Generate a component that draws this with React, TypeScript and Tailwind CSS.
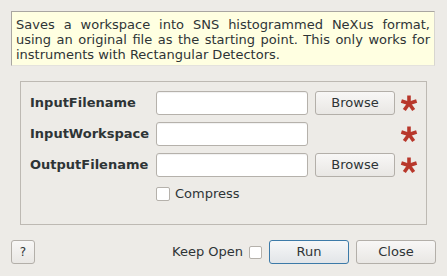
const font = { fontFamily: '"DejaVu Sans", "Liberation Sans", sans-serif' };

const Asterisk = () => (
  <svg width="18" height="18" viewBox="0 0 18 18">
    {[-90, -18, 54, 126, 198].map((a) => {
      const r = (a * Math.PI) / 180;
      return (
        <line
          key={a}
          x1="9"
          y1="9.5"
          x2={9 + Math.cos(r) * 8}
          y2={9.5 + Math.sin(r) * 8}
          stroke="#b8372b"
          strokeWidth="3.6"
          strokeLinecap="butt"
        />
      );
    })}
  </svg>
);

const Field = () => (
  <div className="w-[152px] h-[24px] bg-white border border-[#b5b1ab] rounded-[3px] shadow-[inset_0_1px_1px_rgba(0,0,0,0.06)]" />
);

const Btn = ({ label, primary }: { label: string; primary?: boolean }) => (
  <button
    className={
      "w-[80px] h-[24px] rounded-[3px] border text-[13px] text-[#2e3436] flex items-center justify-center " +
      (primary
        ? "border-[#3c7aa8] bg-gradient-to-b from-[#f6f7f8] to-[#e2e5e8]"
        : "border-[#b3afa9] bg-gradient-to-b from-[#f8f7f6] to-[#e9e7e4]")
    }
  >
    {label}
  </button>
);

const Check = ({ size }: { size: string }) => (
  <div className={"bg-white border border-[#b5b1ab] rounded-[2px] " + size} />
);

const rows = [
  { label: "InputFilename", browse: true },
  { label: "InputWorkspace", browse: false },
  { label: "OutputFilename", browse: true },
];

export default function App() {
  return (
    <div
      className="w-[447px] h-[276px] bg-[#edebe7] text-[#2e3436] text-[13px] p-[11px] flex flex-col overflow-hidden"
      style={font}
    >
      <div className="w-[424px] bg-[#ffffe1] border border-[#a9a6a1] border-r-[#d8d6d0] border-b-[#e4e2dd] pt-[5px] pb-[3px] px-[4px] leading-[15px]">
        <div className="text-justify [text-align-last:justify]">
          Saves a workspace into SNS histogrammed NeXus format,
        </div>
        <div className="text-justify [text-align-last:justify]">
          using an original file as the starting point. This only works for
        </div>
        <div>instruments with Rectangular Detectors.</div>
      </div>

      <div className="mt-[15px] ml-[9px] w-[407px] h-[144px] border border-[#bdb9b3] pt-[9px] pl-[9px] flex flex-col gap-[7px]">
        {rows.map((r) => (
          <div key={r.label} className="flex items-center h-[24px]">
            <div className="w-[126px] font-bold">{r.label}</div>
            <Field />
            <div className="ml-[7px] w-[80px]">{r.browse && <Btn label="Browse" />}</div>
            <div className="ml-[5px] flex items-center">
              <Asterisk />
            </div>
          </div>
        ))}
        <div className="flex items-center h-[20px] ml-[126px]">
          <Check size="w-[14px] h-[14px]" />
          <span className="ml-[5px]">Compress</span>
        </div>
      </div>

      <div className="mt-[15px] flex items-center h-[24px]">
        <button className="w-[24px] h-[24px] rounded-[3px] border border-[#b3afa9] bg-gradient-to-b from-[#f8f7f6] to-[#e9e7e4] text-[12px] flex items-center justify-center">
          ?
        </button>
        <div className="flex-1" />
        <span>Keep Open</span>
        <div className="ml-[6px]">
          <Check size="w-[13px] h-[13px]" />
        </div>
        <div className="ml-[7px]">
          <Btn label="Run" primary />
        </div>
        <div className="ml-[7px]">
          <Btn label="Close" />
        </div>
      </div>
    </div>
  );
}
